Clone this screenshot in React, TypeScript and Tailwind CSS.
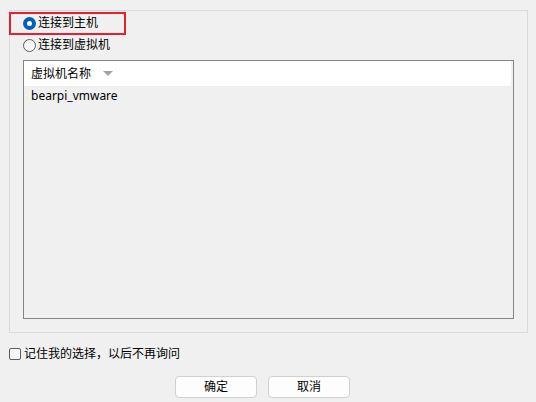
import React, { useState } from 'react';

const font = "font-['Segoe_UI','Noto_Sans','Noto_Sans_CJK_SC',sans-serif]";

const Radio: React.FC<{ checked: boolean; label: string; onClick: () => void }> = ({ checked, label, onClick }) => (
  <div onClick={onClick} className="flex items-center h-[22px] cursor-default">
    {checked ? (
      <div className="w-[13px] h-[13px] rounded-full bg-[#005fb8] flex items-center justify-center">
        <div className="w-[5px] h-[5px] rounded-full bg-white" />
      </div>
    ) : (
      <div className="w-[13px] h-[13px] rounded-full border border-[#5c5c5c] bg-[#f7f7f7]" />
    )}
    <span className="ml-[2px] text-[12px] text-black leading-none">{label}</span>
  </div>
);

export default function App() {
  const [mode, setMode] = useState<'host' | 'vm'>('host');
  const [remember, setRemember] = useState(false);

  return (
    <div className={`relative w-[536px] h-[402px] bg-[#f0f0f0] overflow-hidden ${font}`}>
      {/* group box */}
      <div className="ml-[9px] mt-[10px] w-[519px] h-[323px] border border-[#dadada] pl-[13px] pt-[1px]">
        <Radio checked={mode === 'host'} label="连接到主机" onClick={() => setMode('host')} />
        <Radio checked={mode === 'vm'} label="连接到虚拟机" onClick={() => setMode('vm')} />

        <div className="mt-[4px] w-[491px] h-[259px] border border-[#858585] bg-[#f0f0f0] flex flex-col">
          <div className="flex h-[25px] mr-[2px] bg-white items-center pl-[7px]">
            <span className="text-[12px] text-black">虚拟机名称</span>
            <svg width="10" height="6" viewBox="0 0 10 6" className="ml-[12px] mt-[1px]">
              <path d="M0 0 L10 0 L5 5 Z" fill="#a3a3a3" />
            </svg>
          </div>
          <div className="h-[20px] flex items-center pl-[7px] text-[12px] text-black">bearpi_vmware</div>
        </div>
      </div>

      {/* highlight annotation */}
      <div className="absolute left-[9px] top-[12px] w-[117px] h-[23px] border-2 border-[#e8202e] pointer-events-none" />

      <div onClick={() => setRemember(!remember)} className="flex items-center ml-[9px] mt-[14px] h-[14px]">
        <div className="w-[12px] h-[12px] rounded-[2px] border border-[#5c5c5c] bg-[#f7f7f7]" />
        <span className="ml-[3px] text-[12px] text-black leading-none">记住我的选择，以后不再询问</span>
      </div>

      <div className="flex gap-[11px] ml-[175px] mt-[15px]">
        <button className="w-[82px] h-[22px] rounded-[4px] border border-[#d0d0d0] bg-[#fdfdfd] text-[12px] text-black">确定</button>
        <button className="w-[82px] h-[22px] rounded-[4px] border border-[#d0d0d0] bg-[#fdfdfd] text-[12px] text-black">取消</button>
      </div>
    </div>
  );
}
